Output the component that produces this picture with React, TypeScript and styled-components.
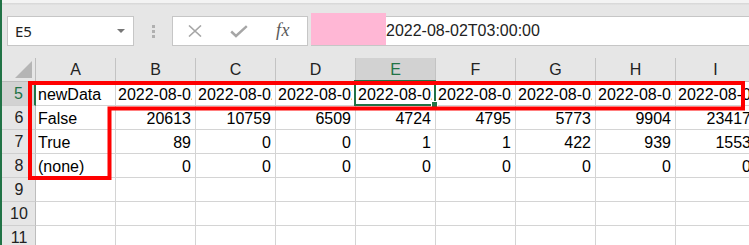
import React from 'react';
import styled, { createGlobalStyle } from 'styled-components';

const Global = createGlobalStyle`
  html, body { margin: 0; padding: 0; background: #e6e6e6; }
  body { font-family: "Liberation Sans", Arial, sans-serif; }
`;

const GREEN = '#217346';

const Window = styled.div`
  position: relative;
  width: 749px;
  height: 245px;
  overflow: hidden;
  box-sizing: border-box;
  border-left: 2px solid ${GREEN};
  background: #e6e6e6;
  display: flex;
  flex-direction: column;
`;

const TopStrip = styled.div`
  flex: none;
  height: 5px;
  background: linear-gradient(#f3f3f3 0, #f3f3f3 3px, #d6d6d6 3px, #e3e3e3 5px);
`;

const Toolbar = styled.div`
  flex: none;
  display: flex;
  align-items: center;
  height: 30px;
  padding: 11px 0 12px 5px;
`;

const NameBox = styled.div`
  box-sizing: border-box;
  width: 127px;
  height: 30px;
  background: #fff;
  border: 1px solid #c6c6c6;
  display: flex;
  align-items: center;
  padding: 0 8px 0 7px;
  font-family: "Noto Sans", sans-serif;
  font-size: 15px;
  color: #222;
`;

const Caret = styled.span`
  margin-left: auto;
  width: 0;
  height: 0;
  border-left: 4px solid transparent;
  border-right: 4px solid transparent;
  border-top: 4px solid #777;
`;

const Grip = styled.div`
  margin-left: 18px;
  display: flex;
  flex-direction: column;
  gap: 2px;
`;

const GripDot = styled.span`
  width: 3px;
  height: 3px;
  background: #b0b0b0;
`;

const FormulaButtons = styled.div`
  box-sizing: border-box;
  margin-left: 17px;
  width: 136px;
  height: 30px;
  background: #fff;
  border: 1px solid #c6c6c6;
  display: grid;
  grid-template-columns: repeat(3, 44px);
  justify-items: center;
  align-items: center;
`;

const Fx = styled.span`
  font-family: "Liberation Serif", "DejaVu Serif", serif;
  font-style: italic;
  font-size: 18px;
  color: #5a5a5a;
  letter-spacing: 0.5px;
  margin-top: -1px;
`;

const FormulaBar = styled.div`
  position: relative;
  box-sizing: border-box;
  margin-left: 3px;
  flex: 1;
  height: 30px;
  background: #fff;
  border-top: 1px solid #c6c6c6;
  border-bottom: 1px solid #c6c6c6;
  border-left: 1px solid #c6c6c6;
  display: flex;
  align-items: center;
  padding-left: 74px;
  font-size: 16px;
  color: #222;
`;

const Redaction = styled.div`
  position: absolute;
  left: -1px;
  top: -4px;
  width: 75px;
  height: 32px;
  background: #ffb7d5;
`;

const Sheet = styled.div`
  flex: none;
  display: grid;
  grid-template-columns: 34px repeat(9, 80px);
  grid-auto-rows: 24px;
  background: #fff;
`;

const Corner = styled.div`
  box-sizing: border-box;
  background: #e6e6e6;
  border-right: 1px solid #bdbdbd;
  border-bottom: 1px solid #bdbdbd;
  display: flex;
  align-items: flex-end;
  justify-content: flex-end;
  padding: 0 2px 2px 0;
`;

const ColHeader = styled.div<{ $selected?: boolean }>`
  box-sizing: border-box;
  background: ${(p) => (p.$selected ? '#d2d2d2' : '#e6e6e6')};
  color: ${(p) => (p.$selected ? GREEN : '#222')};
  border-right: 1px solid #c3c3c3;
  border-bottom: ${(p) => (p.$selected ? `2px solid ${GREEN}` : '1px solid #bdbdbd')};
  font-size: 16px;
  line-height: 23px;
  text-align: center;
`;

const RowHeader = styled.div<{ $selected?: boolean }>`
  box-sizing: border-box;
  background: ${(p) => (p.$selected ? '#d2d2d2' : '#e6e6e6')};
  color: ${(p) => (p.$selected ? GREEN : '#222')};
  border-right: ${(p) => (p.$selected ? `2px solid ${GREEN}` : '1px solid #bdbdbd')};
  border-bottom: 1px solid #cfcfcf;
  font-size: 16px;
  line-height: 23px;
  padding-left: 1px;
  text-align: center;
`;

const Cell = styled.div<{ $align: 'left' | 'right'; $selected?: boolean }>`
  position: ${(p) => (p.$selected ? 'relative' : 'static')};
  box-sizing: border-box;
  min-width: 0;
  border-right: 1px solid #d4d4d4;
  border-bottom: 1px solid #d4d4d4;
  padding: 1px ${(p) => (p.$align === 'right' ? '4px' : '3px')} 0 2px;
  font-size: 16px;
  line-height: 23px;
  color: #000;
  text-align: ${(p) => p.$align};
`;

const CellText = styled.span`
  display: block;
  overflow: hidden;
  white-space: nowrap;
  height: 23px;
`;

const SelectionFrame = styled.div`
  position: absolute;
  left: -2px;
  top: -2px;
  right: -1px;
  bottom: -1px;
  border: 2px solid ${GREEN};
  z-index: 2;
  pointer-events: none;
`;

const FillHandle = styled.span`
  position: absolute;
  right: -4px;
  bottom: -4px;
  width: 5px;
  height: 5px;
  background: ${GREEN};
  border: 1px solid #fff;
`;

const Annotation = styled.svg`
  position: absolute;
  left: -2px;
  top: 0;
  z-index: 3;
  pointer-events: none;
`;

const columns = ['A', 'B', 'C', 'D', 'E', 'F', 'G', 'H', 'I'];

type Row = { n: number; cells: string[] };

const rows: Row[] = [
  {
    n: 5,
    cells: [
      'newData',
      '2022-08-02T00:00:00',
      '2022-08-02T01:00:00',
      '2022-08-02T02:00:00',
      '2022-08-02T03:00:00',
      '2022-08-02T04:00:00',
      '2022-08-02T05:00:00',
      '2022-08-02T06:00:00',
      '2022-08-02T07:00:00',
    ],
  },
  { n: 6, cells: ['False', '20613', '10759', '6509', '4724', '4795', '5773', '9904', '23417'] },
  { n: 7, cells: ['True', '89', '0', '0', '1', '1', '422', '939', '1553'] },
  { n: 8, cells: ['(none)', '0', '0', '0', '0', '0', '0', '0', '0'] },
  { n: 9, cells: ['', '', '', '', '', '', '', '', ''] },
  { n: 10, cells: ['', '', '', '', '', '', '', '', ''] },
  { n: 11, cells: ['', '', '', '', '', '', '', '', ''] },
];

const isNumber = (s: string) => /^\d+$/.test(s);

export default function App() {
  return (
    <>
      <Global />
      <Window>
        <TopStrip />
        <Toolbar>
          <NameBox>
            E5
            <Caret />
          </NameBox>
          <Grip>
            <GripDot />
            <GripDot />
            <GripDot />
          </Grip>
          <FormulaButtons>
            <svg width="14" height="12" viewBox="0 0 14 12">
              <path d="M1 0.5 L13 11.5 M13 0.5 L1 11.5" stroke="#a6a6a6" strokeWidth="1.6" fill="none" />
            </svg>
            <svg width="18" height="13" viewBox="0 0 18 13">
              <path d="M1.2 6.5 L6 11 L16.8 1.2" stroke="#a6a6a6" strokeWidth="2.4" fill="none" />
            </svg>
            <Fx>fx</Fx>
          </FormulaButtons>
          <FormulaBar>
            <Redaction />
            2022-08-02T03:00:00
          </FormulaBar>
        </Toolbar>
        <Sheet>
          <Corner>
            <svg width="18" height="18" viewBox="0 0 18 18">
              <polygon points="17,0 17,17 0,17" fill="#b5b5b5" />
            </svg>
          </Corner>
          {columns.map((c) => (
            <ColHeader key={c} $selected={c === 'E'}>
              {c}
            </ColHeader>
          ))}
          {rows.map((r) => (
            <React.Fragment key={r.n}>
              <RowHeader $selected={r.n === 5}>{r.n}</RowHeader>
              {r.cells.map((v, i) => {
                const selected = r.n === 5 && i === 4;
                return (
                  <Cell key={i} $align={isNumber(v) ? 'right' : 'left'} $selected={selected}>
                    <CellText>{v}</CellText>
                    {selected && (
                      <SelectionFrame>
                        <FillHandle />
                      </SelectionFrame>
                    )}
                  </Cell>
                );
              })}
            </React.Fragment>
          ))}
        </Sheet>
        <Annotation width="749" height="245" viewBox="0 0 749 245">
          <path
            d="M30 83 H743 V108.5 H109.5 V178 H30 Z"
            fill="none"
            stroke="#ff0000"
            strokeWidth="4"
            strokeLinejoin="miter"
          />
        </Annotation>
      </Window>
    </>
  );
}
